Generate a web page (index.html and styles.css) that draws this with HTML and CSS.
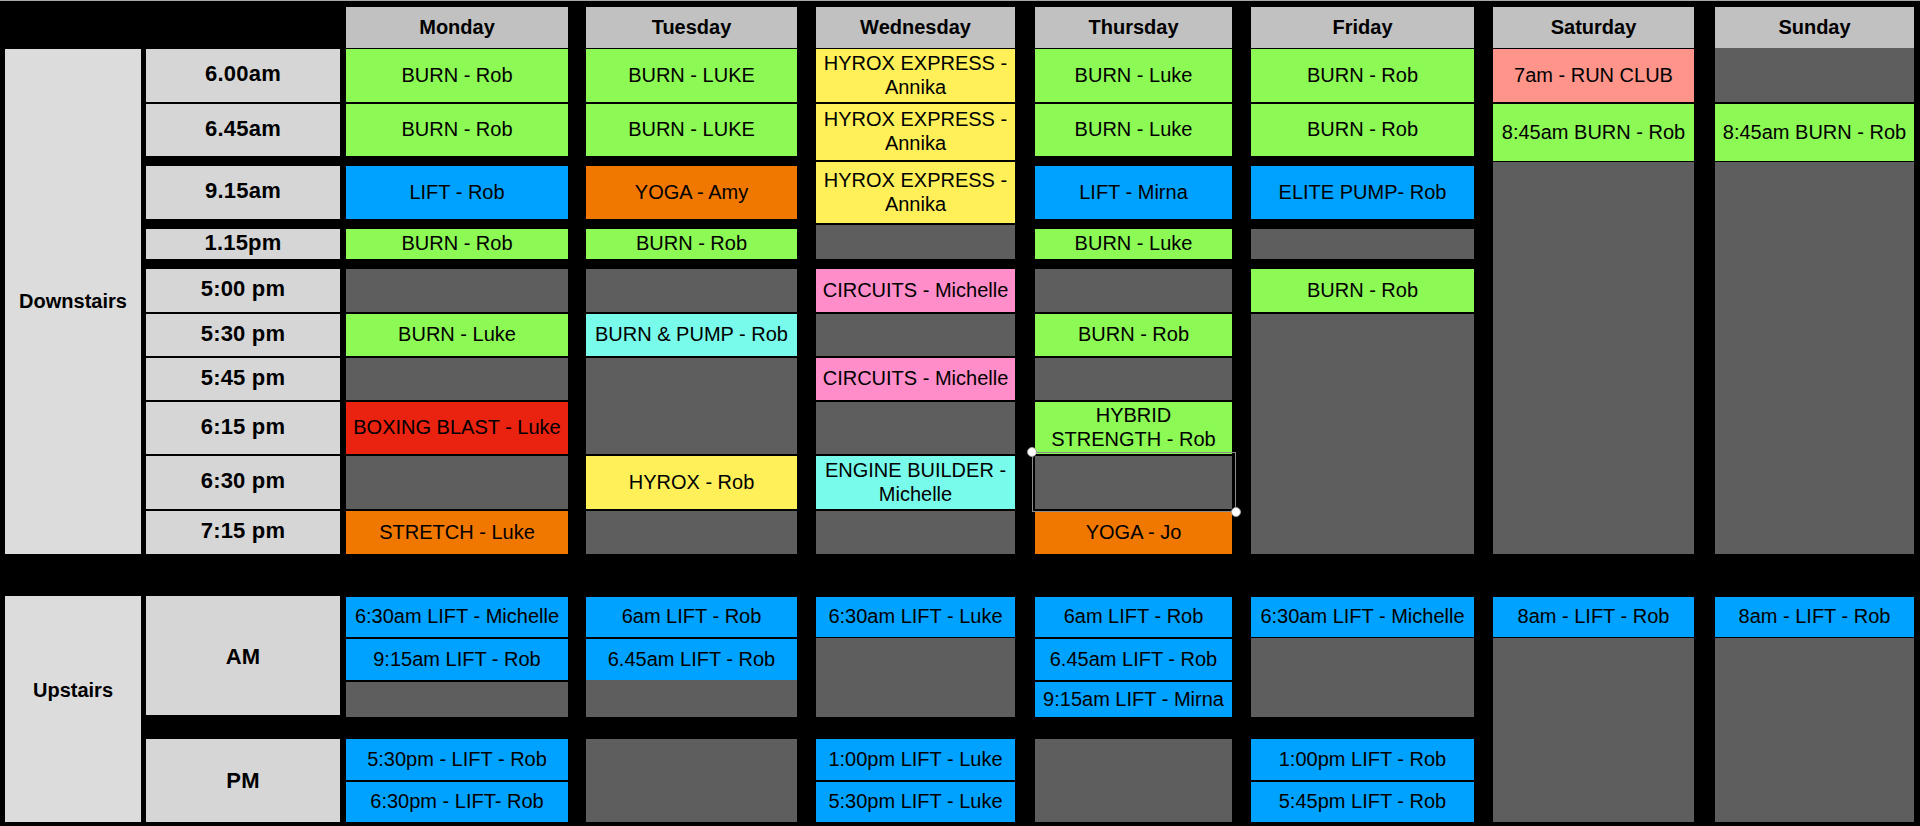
FILE: index.html
```html
<!DOCTYPE html>
<html lang="en">
<head>
<meta charset="utf-8">
<title>Weekly Class Timetable</title>
<link rel="stylesheet" href="styles.css">
</head>
<body>
<div class="board">
  <div class="heads">
    <div class="spacer"></div>
    <div class="day mon">Monday</div>
    <div class="day tue">Tuesday</div>
    <div class="day wed">Wednesday</div>
    <div class="day thu">Thursday</div>
    <div class="day fri">Friday</div>
    <div class="day sat">Saturday</div>
    <div class="day sun">Sunday</div>
  </div>

  <div class="section down">
    <div class="area">Downstairs</div>
    <div class="col time">
      <div class="cell t r1">6.00am</div>
      <div class="cell t r2">6.45am</div>
      <div class="cell t r3">9.15am</div>
      <div class="cell t r4">1.15pm</div>
      <div class="cell t r5">5:00 pm</div>
      <div class="cell t r6">5:30 pm</div>
      <div class="cell t r7">5:45 pm</div>
      <div class="cell t r8">6:15 pm</div>
      <div class="cell t r9">6:30 pm</div>
      <div class="cell t r10">7:15 pm</div>
    </div>
    <div class="col mon">
      <div class="cell green r1">BURN - Rob</div>
      <div class="cell green r2">BURN - Rob</div>
      <div class="cell blue r3">LIFT - Rob</div>
      <div class="cell green r4">BURN - Rob</div>
      <div class="cell grey r5"></div>
      <div class="cell green r6">BURN - Luke</div>
      <div class="cell grey r7"></div>
      <div class="cell red r8">BOXING BLAST - Luke</div>
      <div class="cell grey r9"></div>
      <div class="cell orange r10">STRETCH - Luke</div>
    </div>
    <div class="col tue">
      <div class="cell green r1">BURN - LUKE</div>
      <div class="cell green r2">BURN - LUKE</div>
      <div class="cell orange r3">YOGA - Amy</div>
      <div class="cell green r4">BURN - Rob</div>
      <div class="cell grey r5"></div>
      <div class="cell cyan r6">BURN &amp; PUMP - Rob</div>
      <div class="cell grey r78"></div>
      <div class="cell yellow r9">HYROX - Rob</div>
      <div class="cell grey r10"></div>
    </div>
    <div class="col wed">
      <div class="cell yellow r1">HYROX EXPRESS -<br>Annika</div>
      <div class="cell yellow r2x">HYROX EXPRESS -<br>Annika</div>
      <div class="cell yellow r3x">HYROX EXPRESS -<br>Annika</div>
      <div class="cell grey r4x"></div>
      <div class="cell pink r5">CIRCUITS - Michelle</div>
      <div class="cell grey r6"></div>
      <div class="cell pink r7">CIRCUITS - Michelle</div>
      <div class="cell grey r8"></div>
      <div class="cell cyan r9">ENGINE BUILDER -<br>Michelle</div>
      <div class="cell grey r10"></div>
    </div>
    <div class="col thu">
      <div class="cell green r1">BURN - Luke</div>
      <div class="cell green r2">BURN - Luke</div>
      <div class="cell blue r3">LIFT - Mirna</div>
      <div class="cell green r4">BURN - Luke</div>
      <div class="cell grey r5"></div>
      <div class="cell green r6">BURN - Rob</div>
      <div class="cell grey r7"></div>
      <div class="cell green r8">HYBRID<br>STRENGTH - Rob</div>
      <div class="cell grey r9 selected">
        <div class="sel">
          <span class="handle tl"></span>
          <span class="handle br"></span>
        </div>
      </div>
      <div class="cell orange r10">YOGA - Jo</div>
    </div>
    <div class="col fri">
      <div class="cell green r1">BURN - Rob</div>
      <div class="cell green r2">BURN - Rob</div>
      <div class="cell blue r3">ELITE PUMP- Rob</div>
      <div class="cell grey r4"></div>
      <div class="cell green r5">BURN - Rob</div>
      <div class="cell grey fill"></div>
    </div>
    <div class="col sat">
      <div class="cell salmon r1">7am - RUN CLUB</div>
      <div class="cell green r2s">8:45am BURN - Rob</div>
      <div class="cell grey fill tight"></div>
    </div>
    <div class="col sun">
      <div class="cell grey r1 first"></div>
      <div class="cell green r2s">8:45am BURN - Rob</div>
      <div class="cell grey fill tight"></div>
    </div>
  </div>

  <div class="section up">
    <div class="area upper">Upstairs</div>
    <div class="col time">
      <div class="cell t am">AM</div>
      <div class="cell t pm">PM</div>
    </div>
    <div class="col mon">
      <div class="cell blue u1">6:30am LIFT - Michelle</div>
      <div class="cell blue u2">9:15am LIFT - Rob</div>
      <div class="cell grey u3"></div>
      <div class="cell blue p1">5:30pm - LIFT - Rob</div>
      <div class="cell blue p2">6:30pm - LIFT- Rob</div>
    </div>
    <div class="col tue">
      <div class="cell blue u1">6am LIFT - Rob</div>
      <div class="cell blue u2">6.45am LIFT - Rob</div>
      <div class="cell grey u3 flush"></div>
      <div class="cell grey p12"></div>
    </div>
    <div class="col wed">
      <div class="cell blue u1">6:30am LIFT - Luke</div>
      <div class="cell grey u23"></div>
      <div class="cell blue p1">1:00pm LIFT - Luke</div>
      <div class="cell blue p2">5:30pm LIFT - Luke</div>
    </div>
    <div class="col thu">
      <div class="cell blue u1">6am LIFT - Rob</div>
      <div class="cell blue u2">6.45am LIFT - Rob</div>
      <div class="cell blue u3">9:15am LIFT - Mirna</div>
      <div class="cell grey p12"></div>
    </div>
    <div class="col fri">
      <div class="cell blue u1">6:30am LIFT - Michelle</div>
      <div class="cell grey u23"></div>
      <div class="cell blue p1">1:00pm LIFT - Rob</div>
      <div class="cell blue p2">5:45pm LIFT - Rob</div>
    </div>
    <div class="col sat">
      <div class="cell blue u1">8am - LIFT - Rob</div>
      <div class="cell grey fill tight"></div>
    </div>
    <div class="col sun">
      <div class="cell blue u1">8am - LIFT - Rob</div>
      <div class="cell grey fill tight"></div>
    </div>
  </div>
</div>
</body>
</html>
```

FILE: styles.css
```css
* {
  box-sizing: border-box;
  margin: 0;
  padding: 0;
}

html,
body {
  background: #000;
}

body {
  height: 826px;
  overflow: hidden;
  border-top: 1px solid #a9a9a9;
  font-family: "Liberation Sans", Arial, Helvetica, sans-serif;
  color: #000;
}

.board {
  padding: 6px 0 0 5px;
}

/* ---------- column widths / spacing ---------- */
.area { width: 136px; flex: none; }
.time { margin-left: 5px; width: 194px; flex: none; }
.mon  { margin-left: 6px;  width: 222px; flex: none; }
.tue  { margin-left: 18px; width: 211px; flex: none; }
.wed  { margin-left: 19px; width: 199px; flex: none; }
.thu  { margin-left: 20px; width: 197px; flex: none; }
.fri  { margin-left: 19px; width: 223px; flex: none; }
.sat  { margin-left: 19px; width: 201px; flex: none; }
.sun  { margin-left: 21px; width: 199px; flex: none; }

/* ---------- header row ---------- */
.heads {
  display: flex;
  height: 41px;
}

.heads .spacer {
  width: 335px;
  flex: none;
}

.day {
  display: flex;
  align-items: center;
  justify-content: center;
  background: #c0c1c0;
  font-size: 20px;
  font-weight: bold;
}

/* ---------- sections ---------- */
.section {
  display: flex;
  align-items: stretch;
}

.down {
  margin-top: 1px;
  height: 505px;
}

.up {
  margin-top: 42px;
  height: 226px;
}

.area {
  display: flex;
  align-items: center;
  justify-content: center;
  background: #dcdcdc;
  font-size: 20px;
  font-weight: bold;
}

.area.upper {
  padding-bottom: 38px;
}

.col {
  display: flex;
  flex-direction: column;
}

.cell {
  flex: none;
  display: flex;
  align-items: center;
  justify-content: center;
  text-align: center;
  white-space: nowrap;
  font-size: 20px;
  line-height: 1.2;
  padding-bottom: 2px;
}

.t {
  background: #d6d6d6;
  font-size: 22px;
  font-weight: bold;
  letter-spacing: 0.2px;
}

/* ---------- colours ---------- */
.green  { background: #8cf955; }
.blue   { background: #00a2ff; }
.grey   { background: #5e5e5e; }
.orange { background: #f07700; }
.yellow { background: #fff05a; }
.pink   { background: #ff8dc9; }
.cyan   { background: #78fbea; }
.red    { background: #ea2210; }
.salmon { background: #ff948b; }

/* ---------- downstairs rows ---------- */
.r1  { height: 53px; }
.r2  { margin-top: 2px;  height: 52px; }
.r3  { margin-top: 10px; height: 53px; }
.r4  { margin-top: 10px; height: 30px; }
.r5  { margin-top: 10px; height: 43px; }
.r6  { margin-top: 2px;  height: 42px; }
.r7  { margin-top: 2px;  height: 42px; }
.r8  { margin-top: 2px;  height: 52px; }
.r9  { margin-top: 2px;  height: 53px; }
.r10 { margin-top: 2px;  height: 43px; }

.r78 { margin-top: 2px; height: 96px; }
.r2x { margin-top: 2px; height: 56px; }
.r3x { margin-top: 2px; height: 61px; }
.r4x { margin-top: 2px; height: 34px; }
.r2s { margin-top: 2px; height: 57px; }

.r1.first {
  margin-top: -1px;
  height: 54px;
}

.fill {
  flex: 1 1 auto;
  margin-top: 2px;
}

.fill.tight {
  margin-top: 1px;
}

/* ---------- upstairs rows ---------- */
.u1  { margin-top: 1px;  height: 40px; }
.u2  { margin-top: 2px;  height: 41px; }
.u3  { margin-top: 2px;  height: 35px; }
.u3.flush { margin-top: 0; height: 37px; }
.u23 { margin-top: 1px;  height: 79px; }
.p1  { margin-top: 22px; height: 41px; }
.p2  { margin-top: 2px;  height: 40px; }
.p12 { margin-top: 22px; height: 83px; }

.am { height: 119px; padding: 4px 0 0; }
.pm { margin-top: 24px; height: 83px; padding: 2px 0 0; }

/* ---------- selected cell overlay ---------- */
.selected {
  position: relative;
}

.sel {
  position: absolute;
  left: -3px;
  top: -4px;
  right: -4px;
  bottom: -3px;
  border: 1px solid #8c8c8c;
}

.handle {
  position: absolute;
  width: 10px;
  height: 10px;
  border-radius: 50%;
  background: #fff;
  border: 1px solid #a0a0a0;
}

.handle.tl {
  left: -6px;
  top: -6px;
}

.handle.br {
  right: -6px;
  bottom: -6px;
}
```
